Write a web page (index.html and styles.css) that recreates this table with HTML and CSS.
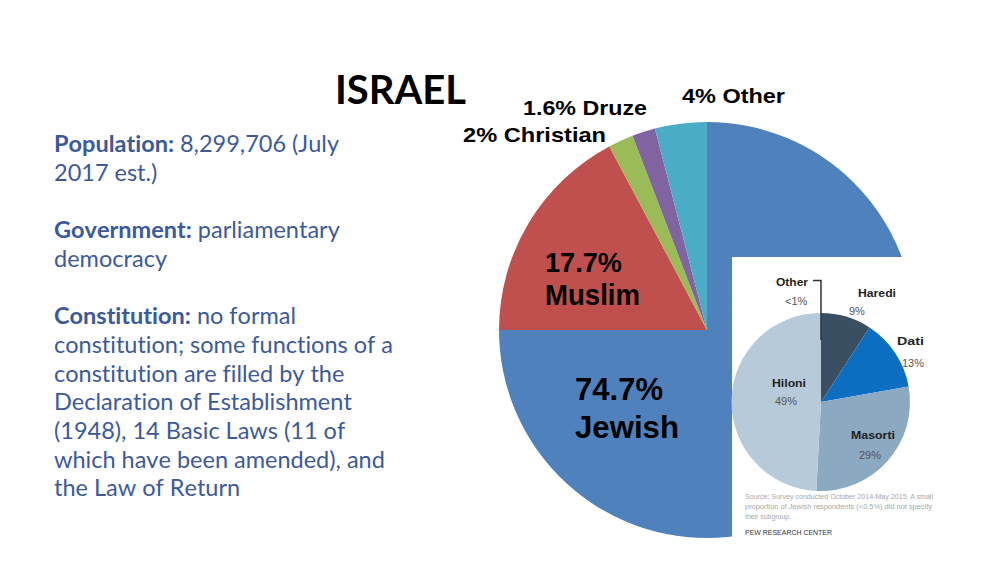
FILE: index.html
```html
<!DOCTYPE html>
<html lang="en">
<head>
<meta charset="utf-8">
<title>Israel</title>
<link rel="stylesheet" href="styles.css">
</head>
<body>
<div class="slide">
  <section class="info">
    <h1 class="title">ISRAEL</h1>
    <div class="facts">
      <p><strong class="label">Population:</strong> <span>8,299,706 (July 2017 est.)</span></p>
      <p><strong class="label">Government:</strong> <span>parliamentary democracy</span></p>
      <p><strong class="label">Constitution:</strong> <span>no formal constitution; some functions of a constitution are filled by the Declaration of Establishment (1948), 14 Basic Laws (11 of which have been amended), and the Law of Return</span></p>
    </div>
  </section>
  <figure class="chart">
    <svg class="chart-svg" width="536" height="584" viewBox="460 0 536 584" xmlns="http://www.w3.org/2000/svg">
      <g class="main-pie">
        <path d="M707,330 L707,122 A208,208 0 1 1 499,330 Z" fill="#4f81bd"/>
        <path d="M707,330 L499,330 A208,208 0 0 1 609.3,146.4 Z" fill="#c0504d"/>
        <path d="M707,330 L609.3,146.4 A208,208 0 0 1 632.5,135.8 Z" fill="#9bbb59"/>
        <path d="M707,330 L632.5,135.8 A208,208 0 0 1 654.9,128.6 Z" fill="#8064a2"/>
        <path d="M707,330 L654.9,128.6 A208,208 0 0 1 707,122 Z" fill="#4bacc6"/>
      </g>
      <g class="main-labels">
        <text x="682" y="103" font-size="21" textLength="103" lengthAdjust="spacingAndGlyphs">4% Other</text>
        <text x="523" y="115" font-size="21" textLength="124" lengthAdjust="spacingAndGlyphs">1.6% Druze</text>
        <text x="463" y="142" font-size="21" textLength="143" lengthAdjust="spacingAndGlyphs">2% Christian</text>
        <text x="545" y="272" font-size="28" textLength="77" lengthAdjust="spacingAndGlyphs">17.7%</text>
        <text x="545" y="305" font-size="29" textLength="95" lengthAdjust="spacingAndGlyphs">Muslim</text>
        <text x="575" y="400" font-size="31" textLength="88" lengthAdjust="spacingAndGlyphs">74.7%</text>
        <text x="575" y="438" font-size="31" textLength="104" lengthAdjust="spacingAndGlyphs">Jewish</text>
      </g>
      <rect x="732" y="257" width="190" height="288" fill="#ffffff"/>
      <g class="inset-pie">
        <path d="M821,402 L821,313 A89,89 0 0 1 869.5,327.4 Z" fill="#3b4f63"/>
        <path d="M821,402 L869.5,327.4 A89,89 0 0 1 908.6,386.5 Z" fill="#0b6ec0"/>
        <path d="M821,402 L908.6,386.5 A89,89 0 0 1 816.3,490.9 Z" fill="#8ba9c1"/>
        <path d="M821,402 L816.3,490.9 A89,89 0 0 1 821,313 Z" fill="#b6cad9"/>
        <path d="M813,280.5 H821 V340" fill="none" stroke="#333" stroke-width="1.5"/>
      </g>
      <g class="inset-labels">
        <text class="b" x="776" y="286" textLength="32" lengthAdjust="spacingAndGlyphs">Other</text>
        <text class="r" x="785" y="305">&lt;1%</text>
        <text class="b" x="858" y="297" textLength="38" lengthAdjust="spacingAndGlyphs">Haredi</text>
        <text class="r" x="849" y="315">9%</text>
        <text class="b" x="897" y="345" textLength="27" lengthAdjust="spacingAndGlyphs">Dati</text>
        <text class="r" x="902" y="367">13%</text>
        <text class="b" x="772" y="387" textLength="34" lengthAdjust="spacingAndGlyphs">Hiloni</text>
        <text class="r" x="775" y="405">49%</text>
        <text class="b" x="851" y="439" textLength="44" lengthAdjust="spacingAndGlyphs">Masorti</text>
        <text class="r" x="859" y="459">29%</text>
      </g>
      <g class="source">
        <text x="745" y="499" textLength="188" lengthAdjust="spacingAndGlyphs">Source: Survey conducted October 2014-May 2015. A small</text>
        <text x="745" y="509" textLength="187" lengthAdjust="spacingAndGlyphs">proportion of Jewish respondents (&lt;0.5%) did not specify</text>
        <text x="745" y="519" textLength="46" lengthAdjust="spacingAndGlyphs">their subgroup.</text>
        <text class="pew" x="745" y="535" textLength="87" lengthAdjust="spacingAndGlyphs">PEW RESEARCH CENTER</text>
      </g>
    </svg>
  </figure>
</div>
</body>
</html>
```
FILE: styles.css
```css
body {
  margin: 0;
  background: #ffffff;
}

.slide {
  width: 996px;
  height: 584px;
  display: grid;
  grid-template-columns: 460px 536px;
  overflow: hidden;
  background: #ffffff;
  font-family: Lato, "Open Sans", sans-serif;
}

.info {
  padding: 64px 0 0 54px;
}

.title {
  margin: 0 0 15px 281px;
  font-size: 40px;
  font-weight: 700;
  line-height: 50px;
  color: #000000;
  white-space: nowrap;
}

.facts p {
  margin: 0 0 28.7px;
  width: 341px;
  font-size: 23.5px;
  line-height: 28.7px;
  color: #3c5a99;
  font-variant-ligatures: none;
  font-kerning: none;
}

.facts .label {
  font-weight: 700;
}

.chart {
  margin: 0;
}

.chart-svg {
  display: block;
}

.main-labels text {
  font-family: "Liberation Sans", Arial, sans-serif;
  font-weight: 700;
  fill: #000000;
}

.inset-labels text {
  font-family: "Liberation Sans", Arial, sans-serif;
  font-size: 11px;
}

.inset-labels .b {
  font-weight: 700;
  fill: #1e1e1e;
}

.inset-labels .r {
  fill: #555555;
}

.source text {
  font-family: "Liberation Sans", Arial, sans-serif;
  font-size: 7.5px;
  fill: #a8a8a8;
}

.source .pew {
  font-size: 8px;
  fill: #333333;
}
```
